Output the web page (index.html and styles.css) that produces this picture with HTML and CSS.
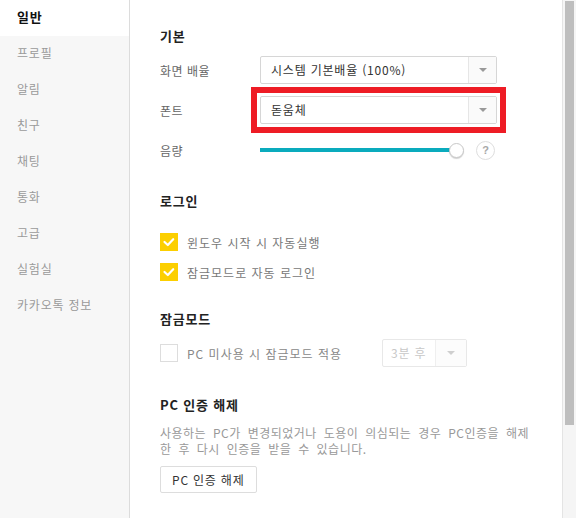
FILE: index.html
```html
<!DOCTYPE html>
<html lang="ko">
<head>
<meta charset="utf-8">
<title>설정</title>
<link rel="stylesheet" href="styles.css">
</head>
<body>
<div class="window">
  <nav class="sidebar">
    <div class="nav-item active">일반</div>
    <div class="nav-item">프로필</div>
    <div class="nav-item">알림</div>
    <div class="nav-item">친구</div>
    <div class="nav-item">채팅</div>
    <div class="nav-item">통화</div>
    <div class="nav-item">고급</div>
    <div class="nav-item">실험실</div>
    <div class="nav-item">카카오톡 정보</div>
  </nav>
  <main class="content">
    <section class="sec sec-basic">
      <h3 class="sec-title">기본</h3>
      <div class="rows">
        <div class="row">
          <span class="label">화면 배율</span>
          <div class="select"><span class="select-text">시스템 기본배율 (100%)</span><span class="select-arrow"></span></div>
        </div>
        <div class="row">
          <span class="label">폰트</span>
          <div class="select highlighted"><span class="select-text">돋움체</span><span class="select-arrow"></span></div>
        </div>
        <div class="row">
          <span class="label">음량</span>
          <div class="volume">
            <div class="track"></div>
            <div class="thumb"></div>
            <div class="help">?</div>
          </div>
        </div>
      </div>
    </section>

    <section class="sec sec-login">
      <h3 class="sec-title">로그인</h3>
      <div class="checks">
        <div class="check-row">
          <span class="checkbox checked"><svg viewBox="0 0 18 18" width="18" height="18"><polyline points="4.5,9 7.8,12 13.2,6.2" fill="none" stroke="#fff" stroke-width="2.2" stroke-linecap="round" stroke-linejoin="round"/></svg></span>
          <span class="check-label">윈도우 시작 시 자동실행</span>
        </div>
        <div class="check-row">
          <span class="checkbox checked"><svg viewBox="0 0 18 18" width="18" height="18"><polyline points="4.5,9 7.8,12 13.2,6.2" fill="none" stroke="#fff" stroke-width="2.2" stroke-linecap="round" stroke-linejoin="round"/></svg></span>
          <span class="check-label">잠금모드로 자동 로그인</span>
        </div>
      </div>
    </section>

    <section class="sec sec-lock">
      <h3 class="sec-title">잠금모드</h3>
      <div class="check-row lock-row">
        <span class="checkbox"></span>
        <span class="check-label lock-label">PC 미사용 시 잠금모드 적용</span>
        <div class="mini-select"><span class="mini-text">3분 후</span><span class="mini-arrow"></span></div>
      </div>
    </section>

    <section class="sec sec-cert">
      <h3 class="sec-title">PC 인증 해제</h3>
      <p class="desc">사용하는 PC가 변경되었거나 도용이 의심되는 경우 PC인증을 해제 한 후 다시 인증을 받을 수 있습니다.</p>
      <button class="btn" type="button">PC 인증 해제</button>
    </section>
  </main>
  <div class="scrollbar"><div class="scroll-thumb"></div></div>
</div>
</body>
</html>
```

FILE: styles.css
```css
html, body {
  margin: 0;
  padding: 0;
  background: #fff;
}

body {
  font-family: "Noto Sans CJK KR", "Noto Sans", sans-serif;
  font-size: 12px;
  letter-spacing: 0.8px;
}

.window {
  display: flex;
  width: 576px;
  height: 518px;
  overflow: hidden;
  background: #fff;
}

/* Sidebar */
.sidebar {
  width: 129px;
  flex: none;
  background: #f7f7f7;
  border-right: 1px solid #dcdcdc;
}

.nav-item {
  height: 36px;
  line-height: 34px;
  padding-left: 17px;
  font-size: 12px;
  color: #9a9a9a;
}

.nav-item.active {
  background: #fff;
  color: #111;
  font-weight: bold;
  font-size: 13px;
}

/* Content */
.content {
  flex: 1;
  min-width: 0;
  padding: 28px 24px 0 30px;
}

.sec-title {
  margin: 0;
  font-size: 13px;
  font-weight: bold;
  line-height: 16px;
  color: #222;
}

.sec-basic .rows {
  margin-top: 6px;
}

.row {
  display: flex;
  align-items: center;
  height: 40px;
}

.label {
  width: 100px;
  flex: none;
  font-size: 12px;
  color: #666;
  letter-spacing: 0.5px;
}

.select {
  width: 237px;
  height: 28px;
  box-sizing: border-box;
  border: 1px solid #d6d6d6;
  border-radius: 2px;
  display: flex;
  background: #fff;
}

.select-text {
  flex: 1;
  padding-left: 10px;
  line-height: 26px;
  font-size: 12px;
  color: #333;
  white-space: nowrap;
}

.select-arrow {
  width: 27px;
  flex: none;
  border-left: 1px solid #e6e6e6;
  background: #fafafa;
  display: flex;
  align-items: center;
  justify-content: center;
}

.select-arrow::after {
  content: "";
  border-left: 4px solid transparent;
  border-right: 4px solid transparent;
  border-top: 4px solid #999;
}

.highlighted {
  position: relative;
}

.highlighted::before {
  content: "";
  position: absolute;
  inset: -10px;
  border: 6px solid #ee1c25;
  pointer-events: none;
}

/* Volume */
.volume {
  display: flex;
  align-items: center;
}

.track {
  width: 197px;
  height: 4px;
  background: #0aabbd;
}

.thumb {
  width: 15px;
  height: 15px;
  box-sizing: border-box;
  margin-left: -8px;
  border-radius: 50%;
  background: #fff;
  border: 1px solid #c9c9c9;
  box-shadow: 0 1px 1px rgba(0, 0, 0, 0.18);
}

.help {
  width: 19px;
  height: 19px;
  box-sizing: border-box;
  margin-left: 12px;
  border: 1px solid #dedede;
  border-radius: 50%;
  text-align: center;
  line-height: 17px;
  font-size: 11px;
  font-weight: bold;
  color: #a8a8a8;
  letter-spacing: 0;
  font-family: "Liberation Sans", sans-serif;
}

/* Login */
.sec-login {
  margin-top: 23px;
}

.checks {
  margin-top: 18px;
}

.check-row {
  display: flex;
  align-items: center;
  height: 30px;
}

.checkbox {
  width: 18px;
  height: 18px;
  box-sizing: border-box;
  flex: none;
  border: 1px solid #dddddd;
  background: #fff;
  display: flex;
}

.checkbox.checked {
  border: none;
  background: #fccf00;
}

.check-label {
  margin-left: 9px;
  font-size: 12px;
  color: #777;
  white-space: nowrap;
  letter-spacing: 1px;
}

/* Lock */
.sec-lock {
  margin-top: 24px;
}

.lock-row {
  margin-top: 11px;
}

.lock-label {
  width: 195px;
  flex: none;
  color: #888;
}

.mini-select {
  width: 85px;
  height: 28px;
  box-sizing: border-box;
  border: 1px solid #e8e8e8;
  border-radius: 2px;
  display: flex;
  background: #fff;
}

.mini-text {
  flex: 1;
  padding-left: 8px;
  line-height: 26px;
  font-size: 12px;
  color: #c8c8c8;
  white-space: nowrap;
}

.mini-arrow {
  width: 30px;
  flex: none;
  border-left: 1px solid #efefef;
  background: #fcfcfc;
  display: flex;
  align-items: center;
  justify-content: center;
}

.mini-arrow::after {
  content: "";
  border-left: 4px solid transparent;
  border-right: 4px solid transparent;
  border-top: 4px solid #cfcfcf;
}

/* Certification */
.sec-cert {
  margin-top: 29px;
}

.desc {
  margin: 12px 0 0;
  max-width: 372px;
  font-size: 12px;
  line-height: 16px;
  color: #999;
  letter-spacing: 0.5px;
  word-spacing: 3px;
}

.btn {
  display: block;
  margin-top: 9px;
  height: 27px;
  padding: 0 11px;
  border: 1px solid #dddddd;
  border-radius: 2px;
  background: #fff;
  font-family: inherit;
  font-size: 12px;
  letter-spacing: 0.8px;
  color: #333;
  line-height: 25px;
}

/* Scrollbar */
.scrollbar {
  width: 11px;
  flex: none;
  border-left: 1px solid #e4e4e4;
  background: #f5f5f5;
  padding: 1px 0 0 2px;
  box-sizing: content-box;
}

.scroll-thumb {
  width: 9px;
  height: 424px;
  background: #bebebe;
}
```
